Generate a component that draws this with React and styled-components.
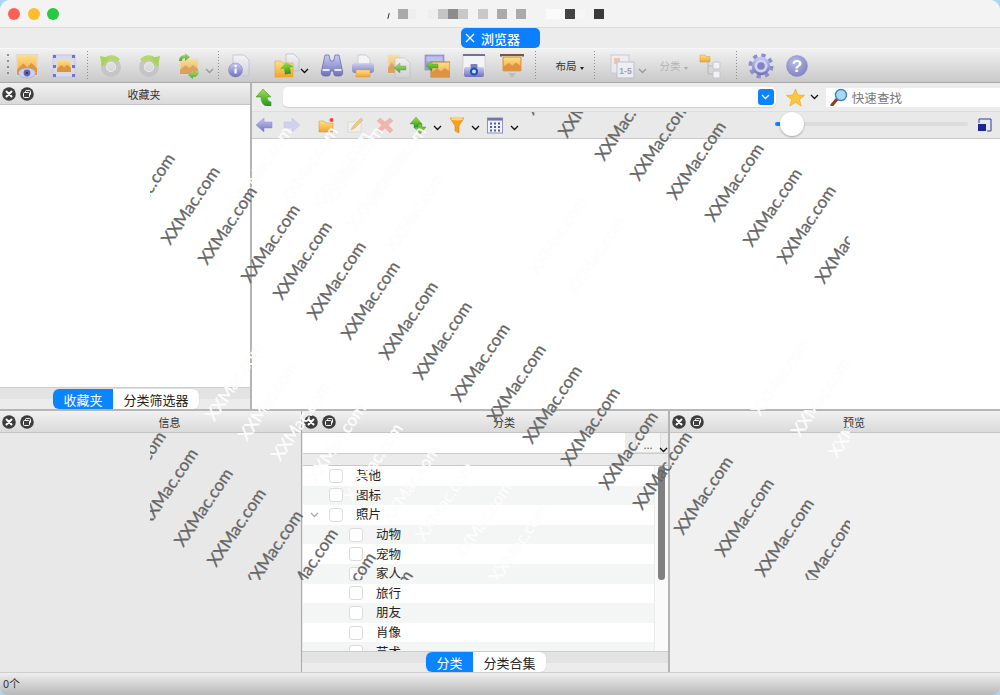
import React from "react";
import styled, { createGlobalStyle } from "styled-components";

const GlobalStyle = createGlobalStyle`
  html, body {
    margin: 0;
    padding: 0;
    background: #a9d4f2;
  }
  body {
    font-family: "Noto Sans CJK SC", "Liberation Sans", sans-serif;
  }
`;

/* ---------- watermark data, page coordinates of each text centre ---------- */
const darkMarks = [
  [145, 192], [190, 205], [227, 225], [270, 243], [302, 260], [336, 280], [370, 300], [408, 320],
  [442, 340], [480, 362], [516, 383], [552, 404], [590, 426], [628, 450], [662, 470],
  [553, 75], [587, 98], [624, 121], [659, 141], [696, 160], [734, 182], [772, 207], [806, 224], [844, 244],
  [136, 470], [168, 487], [203, 507], [236, 527], [273, 549], [308, 567], [346, 591], [383, 609],
  [703, 495], [744, 517], [784, 537], [824, 557],
];
const lightMarks = [
  [262, 165], [308, 165], [353, 165], [396, 165], [340, 170], [376, 190], [414, 212],
  [234, 381], [267, 401], [300, 421], [336, 442], [373, 462], [410, 484], [444, 501], [482, 521], [518, 543],
  [557, 235], [595, 255], [780, 376], [820, 397], [857, 418],
];

/* ---------- small drawn icons ---------- */
const Defs = styled.svg`
  position: absolute;
  width: 0;
  height: 0;
`;

const Gradients = () => (
  <Defs>
    <defs>
      <linearGradient id="pic" x1="0" y1="0" x2="0" y2="1">
        <stop offset="0" stopColor="#fde08a" />
        <stop offset="1" stopColor="#f0a23a" />
      </linearGradient>
      <linearGradient id="grn" x1="0" y1="0" x2="0" y2="1">
        <stop offset="0" stopColor="#a8e04a" />
        <stop offset="1" stopColor="#23961f" />
      </linearGradient>
      <linearGradient id="lav" x1="0" y1="0" x2="0" y2="1">
        <stop offset="0" stopColor="#c9cbf2" />
        <stop offset="1" stopColor="#6f70bd" />
      </linearGradient>
      <linearGradient id="fld" x1="0" y1="0" x2="0" y2="1">
        <stop offset="0" stopColor="#ffe27e" />
        <stop offset="1" stopColor="#f2a52c" />
      </linearGradient>
      <linearGradient id="gry" x1="0" y1="0" x2="0" y2="1">
        <stop offset="0" stopColor="#f4f4f6" />
        <stop offset="1" stopColor="#d0d1d8" />
      </linearGradient>
      <radialGradient id="hlp" cx="0.4" cy="0.3" r="0.8">
        <stop offset="0" stopColor="#b9b9e8" />
        <stop offset="1" stopColor="#7d7dbf" />
      </radialGradient>
    </defs>
  </Defs>
);

const Pic = ({ x, y, w, h, edge = "#e6dcc8" }) => (
  <g>
    <rect x={x} y={y} width={w} height={h} fill="url(#pic)" stroke={edge} />
    <path
      d={`M${x} ${y + h * 0.72} L${x + w * 0.32} ${y + h * 0.42} L${x + w * 0.52} ${y + h * 0.62} L${x + w * 0.72} ${y + h * 0.4} L${x + w} ${y + h * 0.66} V${y + h} H${x} Z`}
      fill="#dd9440"
    />
  </g>
);

const Doc = ({ x, y, w = 14, h = 19 }) => (
  <path
    d={`M${x} ${y} H${x + w - 5} L${x + w} ${y + 5} V${y + h} H${x} Z`}
    fill="url(#gry)"
    stroke="#bfc0c8"
    strokeWidth="0.8"
  />
);

const Arrow = ({ x, y, flip }) => (
  <path
    transform={`translate(${x} ${y}) scale(${flip ? -1 : 1} 1)`}
    d="M0 5 L6 0 V3 H12 V7 H6 V10 Z"
    fill="url(#grn)"
    stroke="#3e9a2a"
    strokeWidth="0.4"
  />
);

const Ring = ({ flip }) => (
  <g transform={flip ? "translate(26 0) scale(-1 1)" : undefined}>
    <circle cx="13" cy="14" r="7.5" fill="none" stroke="#c2c2c2" strokeWidth="5" />
    <circle cx="13" cy="14" r="4.6" fill="none" stroke="#efefef" strokeWidth="1" />
    <path d="M5.5 13 A8 8 0 0 1 20 8" fill="none" stroke="#a8d64c" strokeWidth="5" />
    <path d="M2 3 L11 5 L4 13 Z" fill="#9ccf40" />
  </g>
);

const drawings = {
  eye: (
    <>
      <rect x="2" y="1" width="22" height="22" fill="#dcd6ca" />
      <Pic x={3} y={2} w={20} h={20} />
      <ellipse cx="13" cy="20" rx="8.5" ry="5" fill="#cfd0ee" stroke="#9fa1d2" strokeWidth="0.6" />
      <circle cx="13" cy="20" r="3.4" fill="#6265ad" />
      <circle cx="13" cy="20" r="1.2" fill="#2d2f70" />
    </>
  ),
  fit: (
    <>
      <rect x="2" y="2" width="22" height="22" fill="#d8d9ef" stroke="#c6c7de" />
      <Pic x={6} y={7} w={14} h={12} />
      {[[2, 2], [21, 2], [2, 12], [21, 12], [2, 21], [21, 21]].map(([x, y], i) => (
        <rect key={i} x={x} y={y} width="3" height="3" fill="#7375c4" />
      ))}
    </>
  ),
  undo: <Ring />,
  redo: <Ring flip />,
  sync: (
    <>
      <Pic x={4} y={6} w={18} h={15} />
      <path d="M3 8 Q3 2 9 2 V0 L14 4 L9 8 V5 Q6 5 6 8 Z" fill="url(#grn)" />
      <path d="M23 18 Q23 24 17 24 V26 L12 22 L17 18 V21 Q20 21 20 18 Z" fill="url(#grn)" />
    </>
  ),
  info: (
    <>
      <Doc x={7} y={2} w={16} h={21} />
      <circle cx="9.5" cy="17" r="7" fill="url(#lav)" stroke="#7b7cbb" strokeWidth="0.5" />
      <rect x="8.5" y="15.5" width="2.2" height="5" fill="#fff" />
      <circle cx="9.6" cy="13" r="1.3" fill="#fff" />
    </>
  ),
  folder: (
    <>
      <Doc x={12} y={1} w={13} h={17} />
      <path d="M1 8 H7 L9 10 H19 V24 H1 Z" fill="url(#fld)" stroke="#dc9b35" strokeWidth="0.5" />
      <path d="M6 15 L13 9 L20 15 H16 V21 H10 V15 Z" transform="rotate(-10 13 15)" fill="url(#grn)" />
    </>
  ),
  binoc: (
    <>
      <path d="M6 2 H10 L11.5 8 H14.5 L16 2 H20 L23.5 18 Q24.5 23 20 23 H17 Q14.5 23 14.5 18 H11.5 Q11.5 23 9 23 H6 Q1.5 23 2.5 18 Z" fill="url(#lav)" stroke="#5f60a5" strokeWidth="0.7" />
      <rect x="3.5" y="16" width="7" height="2" fill="#e8e8fb" />
      <rect x="15.5" y="16" width="7" height="2" fill="#e8e8fb" />
    </>
  ),
  print: (
    <>
      <path d="M8 2 H16 L20 6 V12 H8 Z" fill="#f4f4f6" stroke="#c0c0ca" strokeWidth="0.7" />
      <rect x="2" y="10" width="22" height="10" rx="3" fill="url(#lav)" opacity="0.8" />
      <rect x="6" y="17" width="14" height="7" fill="url(#pic)" stroke="#d99a44" strokeWidth="0.5" />
    </>
  ),
  convert: (
    <>
      <Pic x={2} y={2} w={12} h={18} edge="#ddd" />
      <Doc x={9} y={5} w={15} h={20} />
      <Arrow x={8} y={10} />
    </>
  ),
  pics: (
    <>
      <rect x="1" y="2" width="19" height="15" fill="#9ca1dc" stroke="#7d82c2" strokeWidth="0.6" />
      <rect x="2.5" y="3.5" width="16" height="5" fill="#bcc0ec" />
      <Pic x={7} y={9} w={19} h={15} edge="#b78238" />
      <Arrow x={2} y={8} />
    </>
  ),
  camera: (
    <>
      <rect x="2" y="2" width="22" height="19" fill="#f4f4f6" stroke="#c6c7d0" strokeWidth="0.7" />
      <rect x="2" y="1" width="22" height="2" fill="#6d7099" />
      <rect x="3" y="14" width="20" height="10" rx="2" fill="url(#lav)" />
      <rect x="9.5" y="11" width="7" height="4" rx="1" fill="#7b7dbd" />
      <circle cx="13" cy="18.5" r="4" fill="#1f4fb0" />
      <circle cx="13" cy="18.5" r="2" fill="#cfe0ff" />
    </>
  ),
  show: (
    <>
      <rect x="1" y="1" width="24" height="2.5" fill="#6a5c48" />
      <rect x="3" y="3" width="20" height="16" fill="#f6f0e2" />
      <Pic x={4} y={4} w={18} h={14} edge="#c88a34" />
      <path d="M9 20 H17 L13 25 Z" fill="#bdbdc0" />
    </>
  ),
  pages: (
    <>
      <rect x="2" y="2" width="18" height="18" fill="#f0eef0" stroke="#c5c6d6" />
      <rect x="5" y="5" width="6" height="6" fill="#eebcae" />
      <rect x="8" y="9" width="17" height="16" fill="#f3f3f7" stroke="#b8b9d2" />
      <text x="16.5" y="21" textAnchor="middle" fontSize="8.5" fontWeight="700" fill="#8e90b4" fontFamily="Liberation Sans">1-5</text>
    </>
  ),
  tree: (
    <>
      <path d="M2 2 H7 L8.5 3.5 H12 V9 H2 Z" fill="url(#fld)" stroke="#cf9a42" strokeWidth="0.5" />
      <path d="M10 9 V21 H16 M10 13 H16" fill="none" stroke="#b5b5bf" />
      <rect x="15" y="9" width="7" height="7" rx="1" fill="#f2f2f5" stroke="#c4c4ce" />
      <rect x="15" y="18" width="7" height="7" rx="1" fill="#f2f2f5" stroke="#c4c4ce" />
    </>
  ),
  gear: (
    <>
      <circle cx="13" cy="13" r="10.5" fill="none" stroke="#8e8fca" strokeWidth="4" strokeDasharray="4.2 4.05" />
      <circle cx="13" cy="13" r="9.2" fill="url(#lav)" />
      <circle cx="13" cy="13" r="6.5" fill="#d2d3f0" />
      <circle cx="13" cy="13" r="3.8" fill="#8183c4" />
    </>
  ),
  help: (
    <>
      <circle cx="13" cy="13" r="10.5" fill="url(#hlp)" stroke="#8d8dc6" strokeWidth="0.5" />
      <text x="13" y="19" textAnchor="middle" fontSize="17" fontWeight="700" fill="#fff" fontFamily="Liberation Sans">?</text>
    </>
  ),
  up: <path d="M9 1 L17 9 H13 Q13 13 17 14 V18 H12 Q7 16 7 9 H2 Z" fill="url(#grn)" stroke="#2f8f22" strokeWidth="0.5" />,
  back: <path d="M1 9 L9 2 V6 H17 V12 H9 V16 Z" fill="url(#lav)" stroke="#8b8dcc" strokeWidth="0.5" />,
  next: <path d="M17 9 L9 2 V6 H1 V12 H9 V16 Z" fill="#cfd1ee" stroke="#bfc1e2" strokeWidth="0.5" />,
  newFolder: (
    <>
      <path d="M2 5 H7 L9 7 H16 V16 H2 Z" fill="url(#fld)" stroke="#d2973a" strokeWidth="0.5" />
      <circle cx="14.5" cy="4" r="2" fill="#e8483a" />
    </>
  ),
  pencil: (
    <>
      <rect x="2" y="6" width="13" height="10" fill="#f1efe8" stroke="#d2d0c8" strokeWidth="0.6" />
      <path d="M5 14 L7 10 L15 2 L17 4 L9 12 Z" fill="#efc98a" stroke="#caa46a" strokeWidth="0.4" />
    </>
  ),
  cross: <path d="M4 2 L9 6 L14 2 L17 5 L12 9 L17 14 L14 17 L9 12 L4 17 L1 14 L6 9 L1 5 Z" fill="#f0b6ae" stroke="#e7a59c" strokeWidth="0.4" />,
  sort: (
    <>
      <path d="M1 8 L7 1 L13 8 H9 V12 H5 V8 Z" fill="url(#grn)" stroke="#2f8f22" strokeWidth="0.4" />
      <path d="M17 11 L11 18 L5 11 H9 V8 H13 V11 Z" fill="#6cc23a" stroke="#2f8f22" strokeWidth="0.4" />
    </>
  ),
  funnel: (
    <>
      <path d="M2 2 H16 L11 10 V17 L7 15 V10 Z" fill="#f3a123" stroke="#d77f12" strokeWidth="0.5" />
      <ellipse cx="9" cy="3" rx="6.5" ry="1.4" fill="#ffd56e" />
    </>
  ),
  grid: (
    <>
      <rect x="1.5" y="2" width="15" height="15" fill="#f4f4fb" stroke="#8f91b8" />
      <rect x="1.5" y="2" width="15" height="2.6" fill="#7376ad" />
      {[6.5, 10, 13.5].flatMap((y) =>
        [4, 8, 12].map((x) => <rect key={`${x}-${y}`} x={x} y={y} width="2" height="2" fill="#5457b0" />)
      )}
    </>
  ),
  star: <path d="M9.5 1 L12 7 L18.5 7.4 L13.5 11.6 L15.2 18 L9.5 14.4 L3.8 18 L5.5 11.6 L.5 7.4 L7 7 Z" fill="#fbc73e" stroke="#e5a226" strokeWidth="0.6" />,
  lens: (
    <>
      <path d="M2 17 L8 10" stroke="#8c3f12" strokeWidth="3.2" strokeLinecap="round" />
      <circle cx="11" cy="7" r="5.5" fill="#a8d8f8" stroke="#3f7fc0" strokeWidth="1.4" />
    </>
  ),
  thumbs: (
    <>
      <path d="M3 6 V2 H15 V14 H11" fill="none" stroke="#3139a8" strokeWidth="1" />
      <rect x="2" y="7" width="8" height="7" fill="#1d2496" />
    </>
  ),
};

const Svg = styled.svg`
  display: block;
  flex: none;
  opacity: ${(p) => (p.$dim ? 0.8 : 1)};
`;

const Icon = ({ name, size = 26, dim }) => (
  <Svg width={size} height={size} viewBox={`0 0 ${size} ${size}`} $dim={dim}>
    {drawings[name]}
  </Svg>
);

const Chev = styled.svg`
  display: block;
  flex: none;
`;

const Chevron = ({ color = "#111" }) => (
  <Chev width="9" height="6" viewBox="0 0 9 6">
    <path d="M1 1 L4.5 4.5 L8 1" fill="none" stroke={color} strokeWidth="1.3" />
  </Chev>
);

/* ---------- window frame ---------- */
const Window = styled.div`
  position: relative;
  width: 1000px;
  height: 695px;
  overflow: hidden;
  border-radius: 10px 10px 8px 8px;
  display: flex;
  flex-direction: column;
  background: #ececec;
`;

const TitleBar = styled.div`
  height: 27px;
  flex: none;
  display: flex;
  align-items: center;
  padding-left: 8px;
  background: #f3f3f4;
  border-bottom: 1px solid #dcdcdc;
`;

const Light = styled.span`
  width: 12px;
  height: 12px;
  border-radius: 50%;
  margin-right: 7.5px;
  background: ${(p) => p.$c};
`;

const Mosaic = styled.div`
  display: flex;
  align-items: center;
  margin-left: 321px;
`;

const Tile = styled.span`
  width: ${(p) => p.$w}px;
  height: 10px;
  margin-left: ${(p) => p.$ml || 0}px;
  background: ${(p) => p.$c};
`;

const Tick = styled.span`
  width: 1px;
  height: 6px;
  margin-top: 4px;
  background: #333;
  transform: rotate(14deg);
`;

const TabBar = styled.div`
  height: 20px;
  flex: none;
  background: #ececec;
`;

const DocTab = styled.div`
  width: 79px;
  height: 20px;
  margin-left: 461px;
  padding-left: 4px;
  display: flex;
  align-items: center;
  gap: 6px;
  box-sizing: border-box;
  border-radius: 5px;
  color: #fff;
  font-size: 13px;
  font-weight: 500;
  background: #0a7fff;
`;

const Toolbar = styled.div`
  height: 35px;
  flex: none;
  display: flex;
  align-items: center;
  box-sizing: border-box;
  border-top: 1px solid #f6f6f6;
  border-bottom: 1px solid #a9a9a9;
  background: linear-gradient(#f1f1f1, #c9c9c9);
`;

const Grip = styled.div`
  width: 2px;
  height: 24px;
  margin: 0 6px 0 7px;
  background: repeating-linear-gradient(#8c8c8c 0 2px, transparent 2px 6px);
`;

const Tool = styled.div`
  position: relative;
  flex: none;
  display: flex;
  align-items: center;
  justify-content: center;
  width: ${(p) => p.$w}px;
  margin-left: ${(p) => p.$ml}px;
`;

const ToolChev = styled.span`
  position: absolute;
  left: ${(p) => p.$dx}px;
  top: 50%;
  margin-top: ${(p) => p.$dy || 0}px;
`;

const Separator = styled.div`
  flex: none;
  width: 1px;
  height: 30px;
  margin-left: ${(p) => p.$ml}px;
  background: repeating-linear-gradient(#8d8d8d 0 1px, transparent 1px 3px);
`;

const ToolLabel = styled.span`
  font-size: 10.5px;
  color: ${(p) => (p.$dim ? "#b4b4b4" : "#333")};
`;

const Caret = styled.span`
  position: absolute;
  right: -7px;
  top: 9px;
  border: 2px solid transparent;
  border-top: 3px solid ${(p) => (p.$dim ? "#aaa" : "#222")};
`;

// turn centre positions into flow margins
const place = (items, start) => {
  let end = start;
  return items.map((it) => {
    const w = it.sep ? 1 : it.w || 26;
    const ml = Math.round(it.c - w / 2 - end);
    end += ml + w;
    return { ...it, w, ml };
  });
};

const topTools = place(
  [
    { c: 28, icon: "eye" },
    { c: 65, icon: "fit" },
    { c: 88, sep: true },
    { c: 112, icon: "undo", dim: true },
    { c: 150, icon: "redo", dim: true },
    { c: 190, icon: "sync", dim: true, chev: 29, chevColor: "#999" },
    { c: 219, sep: true },
    { c: 240, icon: "info" },
    { c: 288, icon: "folder", chev: 26 },
    { c: 333, icon: "binoc" },
    { c: 364, icon: "print" },
    { c: 400, icon: "convert", dim: true },
    { c: 438, icon: "pics" },
    { c: 475, icon: "camera" },
    { c: 513, icon: "show" },
    { c: 536, sep: true },
    { c: 567, w: 22, label: "布局" },
    { c: 595, sep: true },
    { c: 623, icon: "pages", dim: true, chev: 29, chevColor: "#999" },
    { c: 671, w: 22, label: "分类", dim: true },
    { c: 712, icon: "tree" },
    { c: 737, sep: true },
    { c: 762, icon: "gear" },
    { c: 798, icon: "help" },
  ],
  16
);

const filterTools = place(
  [
    { c: 264, w: 18, icon: "back" },
    { c: 292, w: 18, icon: "next" },
    { c: 326, w: 18, icon: "newFolder" },
    { c: 355, w: 18, icon: "pencil" },
    { c: 385, w: 18, icon: "cross" },
    { c: 418, w: 18, icon: "sort", chev: 24 },
    { c: 457, w: 18, icon: "funnel", chev: 23 },
    { c: 495, w: 18, icon: "grid", chev: 24 },
  ],
  252
);

/* ---------- panels ---------- */
const Upper = styled.div`
  flex: none;
  height: 328px;
  display: flex;
  border-bottom: 2px solid #b6b6b6;
  box-sizing: border-box;
  background: #ececec;
`;

const LeftPane = styled.div`
  width: 250px;
  flex: none;
  display: flex;
  flex-direction: column;
  border-right: 2px solid #b4b4b4;
`;

const Browser = styled.div`
  flex: 1;
  min-width: 0;
  display: flex;
  flex-direction: column;
`;

const AddressRow = styled.div`
  height: 29px;
  flex: none;
  display: flex;
  align-items: center;
  box-sizing: border-box;
  border-bottom: 1px solid #dedede;
`;

const UpButton = styled.div`
  margin-left: 2px;
`;

const Address = styled.div`
  width: 495px;
  height: 20px;
  margin-left: 11px;
  display: flex;
  justify-content: flex-end;
  align-items: center;
  padding-right: 2px;
  box-sizing: border-box;
  border-radius: 5px;
  background: #fff;
  box-shadow: 0 1px 1px #cfcfcf;
`;

const ComboButton = styled.div`
  width: 16px;
  height: 16px;
  display: flex;
  align-items: center;
  justify-content: center;
  border-radius: 3px;
  background: #0a84ff;
`;

const Favorite = styled.div`
  display: flex;
  align-items: center;
  gap: 5px;
  margin-left: 10px;
`;

const Search = styled.div`
  width: 175px;
  height: 19px;
  margin-left: 7px;
  display: flex;
  align-items: center;
  gap: 4px;
  padding-left: 4px;
  box-sizing: border-box;
  font-size: 12.5px;
  letter-spacing: 0.1px;
  color: #777;
  background: #fff;
`;

const FilterRow = styled.div`
  height: 26px;
  flex: none;
  display: flex;
  align-items: center;
  background: #e9e9e9;
  border-bottom: 1px solid #c9c9c9;
`;

const Slider = styled.div`
  position: relative;
  width: 193px;
  height: 4px;
  margin-left: 271px;
  margin-top: -2px;
  border-radius: 2px;
  background: #dcdcdc;
`;

const SliderFill = styled.div`
  width: 8px;
  height: 100%;
  border-radius: 2px;
  background: #0a84ff;
`;

const Thumb = styled.div`
  position: absolute;
  left: 5px;
  top: -10px;
  width: 24px;
  height: 24px;
  border-radius: 50%;
  background: #fff;
  box-shadow: 0 1px 2px rgba(0, 0, 0, 0.3);
`;

const ThumbSize = styled.div`
  margin-left: 8px;
`;

const WhiteArea = styled.div`
  flex: 1;
  background: #fff;
`;

const PanelHead = styled.div`
  height: 22px;
  flex: none;
  display: flex;
  align-items: center;
  padding-left: 2px;
  gap: 4px;
  box-sizing: border-box;
  border-bottom: 1px solid #c4c4c4;
  background: linear-gradient(#f1f1f1, #dadada);
`;

const PanelTitle = styled.span`
  flex: 1;
  text-align: center;
  font-size: 11px;
  color: #333;
`;

const RoundBtn = styled.svg`
  display: block;
  flex: none;
`;

const CloseBtn = () => (
  <RoundBtn width="14" height="14" viewBox="0 0 14 14">
    <circle cx="7" cy="7" r="6.8" fill="#3d3d3d" />
    <path d="M4.5 4.5 L9.5 9.5 M9.5 4.5 L4.5 9.5" stroke="#fff" strokeWidth="2" strokeLinecap="round" />
  </RoundBtn>
);

const FloatBtn = () => (
  <RoundBtn width="14" height="14" viewBox="0 0 14 14">
    <circle cx="7" cy="7" r="6.8" fill="#3d3d3d" />
    <rect x="5.5" y="3.5" width="5" height="4.5" rx="1" fill="none" stroke="#fff" />
    <rect x="3.5" y="5.5" width="6" height="5" rx="1" fill="#3d3d3d" stroke="#fff" />
  </RoundBtn>
);

const Head = ({ title }) => (
  <PanelHead>
    <CloseBtn />
    <FloatBtn />
    <PanelTitle>{title}</PanelTitle>
  </PanelHead>
);

const TabsRow = styled.div`
  height: ${(p) => p.$h}px;
  flex: none;
  display: flex;
  justify-content: center;
  align-items: flex-end;
  padding-left: 2px;
  background: linear-gradient(#e3e3e3 0 11px, #ececec 11px);
  border-top: 1px solid #cdcdcd;
  box-sizing: border-box;
`;

const Segments = styled.div`
  display: flex;
  height: 20px;
  overflow: hidden;
  border-radius: 6px;
  background: #fff;
  box-shadow: 0 0 1px #bbb;
`;

const Segment = styled.div`
  width: ${(p) => p.$w}px;
  display: flex;
  align-items: center;
  justify-content: center;
  font-size: 13px;
  color: ${(p) => (p.$on ? "#fff" : "#222")};
  background: ${(p) => (p.$on ? "#0a84ff" : "transparent")};
`;

const Tabs = ({ h, items }) => (
  <TabsRow $h={h}>
    <Segments>
      {items.map(([label, w], i) => (
        <Segment key={label} $w={w} $on={i === 0}>
          {label}
        </Segment>
      ))}
    </Segments>
  </TabsRow>
);

const Lower = styled.div`
  flex: none;
  height: 261px;
  display: grid;
  grid-template-columns: 301px 369px 1fr;
  grid-template-rows: minmax(0, 1fr);
`;

const Column = styled.div`
  display: flex;
  flex-direction: column;
  min-width: 0;
  min-height: 0;
  background: ${(p) => p.$bg};
`;

const MiddleColumn = styled(Column)`
  border-left: 1px solid #a9a9a9;
  border-right: 2px solid #b4b4b4;
`;

const PathRow = styled.div`
  position: relative;
  height: 21px;
  flex: none;
  display: flex;
  margin-left: 1px;
  box-sizing: border-box;
  border-bottom: 1px solid #cdcdcd;
`;

const PathInput = styled.div`
  width: 322px;
  background: #fff;
`;

const MoreButton = styled.div`
  width: 26px;
  margin-left: 10px;
  text-align: center;
  font-size: 11px;
  line-height: 22px;
  color: #666;
  background: #f5f5f5;
  border: 1px solid #dedede;
  border-top: 0;
  box-sizing: border-box;
`;

const PathChev = styled.span`
  position: absolute;
  right: 0;
  bottom: 0;
`;

const Strip = styled.div`
  height: 11px;
  flex: none;
  margin-left: 1px;
  background: #ebebeb;
  border-bottom: 1px solid #c8c8c8;
`;

const ListArea = styled.div`
  flex: 1;
  min-height: 0;
  display: flex;
  margin-left: 1px;
  overflow: hidden;
`;

const List = styled.div`
  flex: 1;
  min-width: 0;
`;

const Row = styled.div`
  height: 19.6px;
  display: flex;
  align-items: center;
  font-size: 12.5px;
  color: #222;
  background: ${(p) => (p.$alt ? "#f4f5f5" : "#fff")};
`;

const RowLabel = styled.span`
  position: relative;
  top: -1px;
`;

const Twist = styled.span`
  width: ${(p) => (p.$level ? 46 : 26)}px;
  flex: none;
  display: flex;
  justify-content: center;
  padding-right: ${(p) => (p.$level ? 0 : 4)}px;
  box-sizing: border-box;
`;

const Check = styled.span`
  width: 14px;
  height: 14px;
  flex: none;
  box-sizing: border-box;
  border: 1px solid #dcdcdc;
  border-radius: 3px;
  background: #fff;
  margin-right: 13px;
`;

const ScrollTrack = styled.div`
  width: 14px;
  flex: none;
  padding: 0 3px 0 3px;
  box-sizing: border-box;
  background: #fafafa;
  border-left: 1px solid #ececec;
`;

const ScrollThumb = styled.div`
  height: 114px;
  border-radius: 4px;
  background: #808080;
`;

const StatusBar = styled.div`
  flex: 1;
  display: flex;
  align-items: center;
  padding: 0 0 2px 3px;
  font-size: 11px;
  color: #333;
  border-top: 1px solid #cfcfcf;
  background: linear-gradient(#eeeeee, #b8b8b8);
`;

const categories = [
  ["其他", 0],
  ["图标", 0],
  ["照片", 0, true],
  ["动物", 1],
  ["宠物", 1],
  ["家人", 1],
  ["旅行", 1],
  ["朋友", 1],
  ["肖像", 1],
  ["艺术", 1],
];

/* ---------- watermark overlay ---------- */
const Overlay = styled.div`
  position: absolute;
  left: 150px;
  top: 112px;
  width: 700px;
  height: 468px;
  overflow: hidden;
  pointer-events: none;
`;

const Mark = styled.span.attrs((p) => ({
  style: { left: p.$x - 150, top: p.$y - 112 },
}))`
  position: absolute;
  transform: translate(-50%, -50%) rotate(-56deg);
  font-family: Lato, "Liberation Sans", sans-serif;
  font-size: 17px;
  white-space: nowrap;
  -webkit-text-stroke: 0.3px currentColor;
  color: ${(p) => (p.$light ? "#fdfdfd" : "#666666")};
`;

const ToolItem = ({ it }) => {
  if (it.sep) return <Separator $ml={it.ml} />;
  return (
    <Tool $w={it.w} $ml={it.ml}>
      {it.label ? (
        <ToolLabel $dim={it.dim}>
          {it.label}
          <Caret $dim={it.dim} />
        </ToolLabel>
      ) : (
        <Icon name={it.icon} size={it.w} dim={it.dim} />
      )}
      {it.chev && (
        <ToolChev $dx={it.chev} $dy={it.w === 18 ? 0 : 2}>
          <Chevron color={it.chevColor} />
        </ToolChev>
      )}
    </Tool>
  );
};

const App = () => (
  <>
    <GlobalStyle />
    <Gradients />
    <Window>
      <TitleBar>
        <Light $c="#ff5f57" />
        <Light $c="#febc2e" />
        <Light $c="#28c840" />
        <Mosaic>
          <Tick />
          <Tile $w={10} $ml={9} $c="#aaaaaa" />
          <Tile $w={8} $c="#eeeeee" />
          <Tile $w={10} $ml={12} $c="#eeeeee" />
          <Tile $w={10} $c="#c4c4c4" />
          <Tile $w={10} $c="#8c8c8c" />
          <Tile $w={10} $c="#c8c8c8" />
          <Tile $w={10} $ml={10} $c="#c8c8c8" />
          <Tile $w={10} $ml={9} $c="#aaaaaa" />
          <Tile $w={10} $ml={9} $c="#aaaaaa" />
          <Tile $w={19} $ml={20} $c="#fafafa" />
          <Tile $w={10} $c="#444444" />
          <Tile $w={10} $c="#f6f6f6" />
          <Tile $w={10} $ml={9} $c="#3a3a3a" />
        </Mosaic>
      </TitleBar>
      <TabBar>
        <DocTab>
          <svg width="10" height="10" viewBox="0 0 10 10">
            <path d="M1 1 L9 9 M9 1 L1 9" stroke="#fff" strokeWidth="1.2" />
          </svg>
          浏览器
        </DocTab>
      </TabBar>
      <Toolbar>
        <Grip />
        {topTools.map((it) => (
          <ToolItem key={it.c} it={it} />
        ))}
      </Toolbar>
      <Upper>
        <LeftPane>
          <Head title="收藏夹" />
          <WhiteArea />
          <Tabs h={22} items={[["收藏夹", 60], ["分类筛选器", 86]]} />
        </LeftPane>
        <Browser>
          <AddressRow>
            <UpButton>
              <Icon name="up" size={18} />
            </UpButton>
            <Address>
              <ComboButton>
                <Chevron color="#fff" />
              </ComboButton>
            </Address>
            <Favorite>
              <Icon name="star" size={19} />
              <Chevron />
            </Favorite>
            <Search>
              <Icon name="lens" size={18} />
              快速查找
            </Search>
          </AddressRow>
          <FilterRow>
            {filterTools.map((it) => (
              <ToolItem key={it.c} it={it} />
            ))}
            <Slider>
              <SliderFill />
              <Thumb />
            </Slider>
            <ThumbSize>
              <Icon name="thumbs" size={16} />
            </ThumbSize>
          </FilterRow>
          <WhiteArea />
        </Browser>
      </Upper>
      <Lower>
        <Column $bg="#e8e8e8">
          <Head title="信息" />
        </Column>
        <MiddleColumn $bg="#ececec">
          <Head title="分类" />
          <PathRow>
            <PathInput />
            <MoreButton>...</MoreButton>
            <PathChev>
              <Chevron />
            </PathChev>
          </PathRow>
          <Strip />
          <ListArea>
            <List>
              {categories.map(([label, level, open], i) => (
                <Row key={label} $alt={i % 2 === 1}>
                  <Twist $level={level}>{open && <Chevron color="#aaa" />}</Twist>
                  <Check />
                  <RowLabel>{label}</RowLabel>
                </Row>
              ))}
            </List>
            <ScrollTrack>
              <ScrollThumb />
            </ScrollTrack>
          </ListArea>
          <Tabs h={21} items={[["分类", 47], ["分类合集", 73]]} />
        </MiddleColumn>
        <Column $bg="#f0f0f0">
          <Head title="预览" />
        </Column>
      </Lower>
      <StatusBar>0个</StatusBar>
      <Overlay>
        {lightMarks.map(([x, y]) => (
          <Mark key={`l${x}-${y}`} $x={x} $y={y} $light>
            XXMac.com
          </Mark>
        ))}
        {darkMarks.map(([x, y]) => (
          <Mark key={`d${x}-${y}`} $x={x} $y={y}>
            XXMac.com
          </Mark>
        ))}
      </Overlay>
    </Window>
  </>
);

export default App;
